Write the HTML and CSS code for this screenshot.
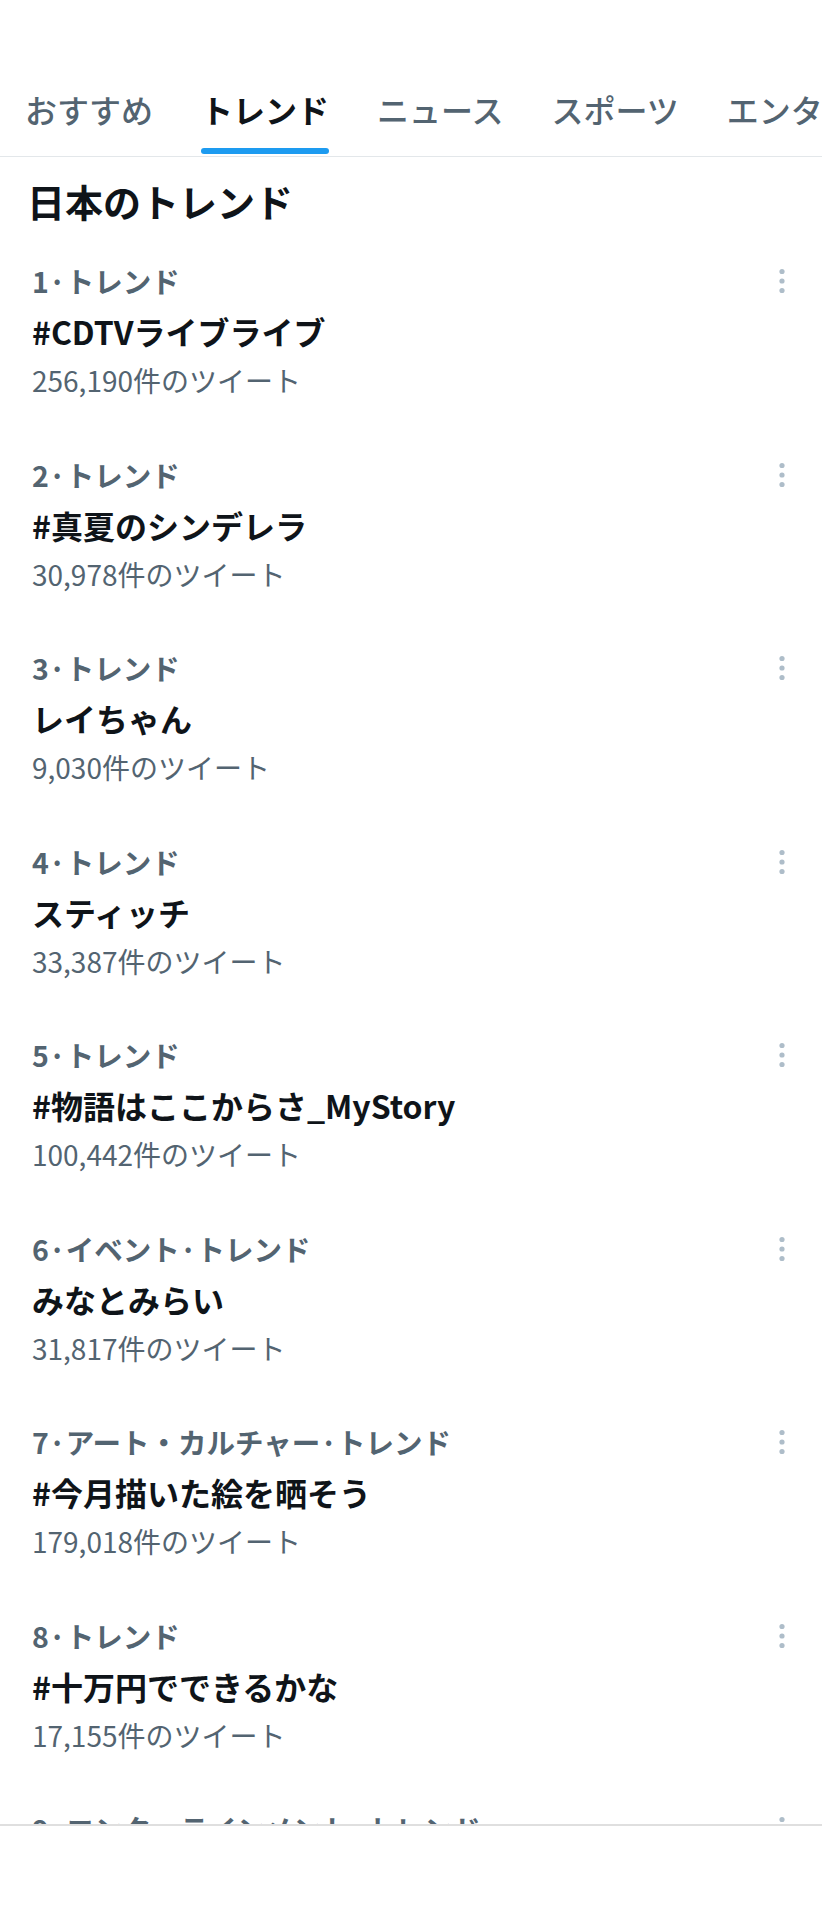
FILE: index.html
```html
<!DOCTYPE html>
<html lang="ja">
<head>
  <meta charset="UTF-8">
  <title>トレンド</title>
  <link rel="stylesheet" href="styles.css">
</head>
<body>
  <div class="page">
    <div class="content">
      <nav class="tabs">
        <div class="tab">おすすめ</div>
        <div class="tab active">トレンド</div>
        <div class="tab">ニュース</div>
        <div class="tab">スポーツ</div>
        <div class="tab">エンターテインメント</div>
      </nav>

      <h2 class="heading">日本のトレンド</h2>

      <div class="trend-list">
        <div class="trend">
          <div class="trend-meta">1·トレンド</div>
          <div class="trend-name">#CDTVライブライブ</div>
          <div class="trend-count">256,190件のツイート</div>
          <svg class="more" width="6" height="26" viewBox="0 0 6 26"><circle cx="3" cy="3.5" r="2.6"/><circle cx="3" cy="13" r="2.6"/><circle cx="3" cy="22.5" r="2.6"/></svg>
        </div>
        <div class="trend">
          <div class="trend-meta">2·トレンド</div>
          <div class="trend-name">#真夏のシンデレラ</div>
          <div class="trend-count">30,978件のツイート</div>
          <svg class="more" width="6" height="26" viewBox="0 0 6 26"><circle cx="3" cy="3.5" r="2.6"/><circle cx="3" cy="13" r="2.6"/><circle cx="3" cy="22.5" r="2.6"/></svg>
        </div>
        <div class="trend">
          <div class="trend-meta">3·トレンド</div>
          <div class="trend-name">レイちゃん</div>
          <div class="trend-count">9,030件のツイート</div>
          <svg class="more" width="6" height="26" viewBox="0 0 6 26"><circle cx="3" cy="3.5" r="2.6"/><circle cx="3" cy="13" r="2.6"/><circle cx="3" cy="22.5" r="2.6"/></svg>
        </div>
        <div class="trend">
          <div class="trend-meta">4·トレンド</div>
          <div class="trend-name">スティッチ</div>
          <div class="trend-count">33,387件のツイート</div>
          <svg class="more" width="6" height="26" viewBox="0 0 6 26"><circle cx="3" cy="3.5" r="2.6"/><circle cx="3" cy="13" r="2.6"/><circle cx="3" cy="22.5" r="2.6"/></svg>
        </div>
        <div class="trend">
          <div class="trend-meta">5·トレンド</div>
          <div class="trend-name">#物語はここからさ_MyStory</div>
          <div class="trend-count">100,442件のツイート</div>
          <svg class="more" width="6" height="26" viewBox="0 0 6 26"><circle cx="3" cy="3.5" r="2.6"/><circle cx="3" cy="13" r="2.6"/><circle cx="3" cy="22.5" r="2.6"/></svg>
        </div>
        <div class="trend">
          <div class="trend-meta">6·イベント·トレンド</div>
          <div class="trend-name">みなとみらい</div>
          <div class="trend-count">31,817件のツイート</div>
          <svg class="more" width="6" height="26" viewBox="0 0 6 26"><circle cx="3" cy="3.5" r="2.6"/><circle cx="3" cy="13" r="2.6"/><circle cx="3" cy="22.5" r="2.6"/></svg>
        </div>
        <div class="trend">
          <div class="trend-meta">7·アート・カルチャー·トレンド</div>
          <div class="trend-name">#今月描いた絵を晒そう</div>
          <div class="trend-count">179,018件のツイート</div>
          <svg class="more" width="6" height="26" viewBox="0 0 6 26"><circle cx="3" cy="3.5" r="2.6"/><circle cx="3" cy="13" r="2.6"/><circle cx="3" cy="22.5" r="2.6"/></svg>
        </div>
        <div class="trend">
          <div class="trend-meta">8·トレンド</div>
          <div class="trend-name">#十万円でできるかな</div>
          <div class="trend-count">17,155件のツイート</div>
          <svg class="more" width="6" height="26" viewBox="0 0 6 26"><circle cx="3" cy="3.5" r="2.6"/><circle cx="3" cy="13" r="2.6"/><circle cx="3" cy="22.5" r="2.6"/></svg>
        </div>
        <div class="trend">
          <div class="trend-meta">9·エンターテインメント·トレンド</div>
          <svg class="more" width="6" height="26" viewBox="0 0 6 26"><circle cx="3" cy="3.5" r="2.6"/><circle cx="3" cy="13" r="2.6"/><circle cx="3" cy="22.5" r="2.6"/></svg>
        </div>
      </div>
    </div>
    <div class="bottom-bar"></div>
  </div>
</body>
</html>
```

FILE: styles.css
```css
body {
  margin: 0;
  background-color: #fff;
  font-family: "Noto Sans CJK JP", "Noto Sans", sans-serif;
  color: #0f1419;
}

.page {
  height: 1920px;
  display: flex;
  flex-direction: column;
}

.content {
  flex: 1;
  overflow: hidden;
}

.tabs {
  display: flex;
  gap: 48px;
  padding: 89px 0 0 25px;
  border-bottom: 1px solid #e3e7ea;
  white-space: nowrap;
  overflow: hidden;
}

.tab {
  position: relative;
  font-size: 32px;
  line-height: 40px;
  font-weight: 500;
  color: #536471;
  padding-bottom: 27px;
  flex-shrink: 0;
}

.tab.active {
  color: #0f1419;
  font-weight: 700;
}

.tab.active::after {
  content: '';
  position: absolute;
  left: 0;
  right: 0;
  bottom: 2px;
  height: 6px;
  border-radius: 3px;
  background-color: #1d9bf0;
}

.heading {
  margin: 20px 0 0 27px;
  font-size: 38px;
  line-height: 48px;
  font-weight: 700;
}

.trend-list {
  margin-top: 16px;
}

.trend {
  position: relative;
  height: 193.5px;
  box-sizing: border-box;
  padding: 20px 0 0 32px;
}

.trend-meta {
  font-size: 28.5px;
  line-height: 40px;
  font-weight: 600;
  color: #536471;
}

.trend-name {
  margin-top: 10px;
  font-size: 32px;
  line-height: 40px;
  font-weight: 700;
}

.trend-count {
  margin-top: 9px;
  font-size: 28px;
  line-height: 40px;
  color: #536471;
}

.more {
  position: absolute;
  top: 27px;
  right: 37px;
  fill: #aebdc9;
}

.bottom-bar {
  height: 94px;
  border-top: 2px solid #dfdfdf;
  background-color: #fff;
}
```
